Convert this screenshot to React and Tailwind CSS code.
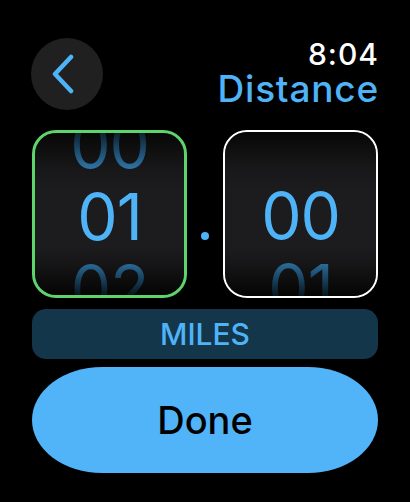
const font = { fontFamily: 'Inter, "Noto Sans", sans-serif' }

function Picker({ values, active }) {
    return (
        <div
            className={`relative h-[168px] w-[155px] overflow-hidden rounded-[24px] bg-[#1c1c1e] ${
                active ? 'border-[3px] border-[#5fd36c]' : 'border-2 border-white'
            }`}
        >
            <div className="absolute inset-x-0 top-[-24px] flex flex-col items-center">
                {values.map((v, i) => (
                    <div
                        key={i}
                        className={`h-[72px] text-[64px] leading-[72px] font-normal tracking-[-1px] ${
                            i === 1 ? 'text-[#4fb3f7]' : 'text-[#3588c2]'
                        }`}
                    >
                        {v}
                    </div>
                ))}
            </div>
            {/* top/bottom fade */}
            <div className="pointer-events-none absolute inset-0 bg-[linear-gradient(to_bottom,rgba(0,0,0,0.75),rgba(0,0,0,0.15)_22%,transparent_35%,transparent_70%,rgba(0,0,0,0.2)_80%,rgba(0,0,0,0.85))]" />
        </div>
    )
}

export default function App() {
    return (
        <div className="flex h-[502px] w-[410px] flex-col bg-black px-[32px]" style={font}>
            {/* Header */}
            <div className="flex items-start justify-between pt-[38px]">
                <button className="flex h-[72px] w-[72px] -ml-px items-center justify-center rounded-full bg-[#202020]">
                    <svg width="26" height="40" viewBox="0 0 26 40" className="-ml-[6px]">
                        <path
                            d="M20 3 L4 20 L20 37"
                            fill="none"
                            stroke="#4fb3f7"
                            strokeWidth="4.5"
                            strokeLinecap="round"
                            strokeLinejoin="round"
                        />
                    </svg>
                </button>
                <div className="-mr-px flex flex-col items-end pt-px">
                    <div className="text-[30px] leading-[30px] font-medium tracking-[1px] text-white">8:04</div>
                    <div className="mt-[2px] text-[37px] leading-[36px] font-medium tracking-[0.8px] text-[#4fb3f7]">
                        Distance
                    </div>
                </div>
            </div>

            {/* Pickers */}
            <div className="mt-[20px] flex items-end justify-between">
                <Picker values={['00', '01', '02']} active />
                <div className="mb-[58px] h-[8px] w-[8px] rounded-full bg-[#4fb3f7]" />
                <Picker values={['', '00', '01']} />
            </div>

            {/* Units */}
            <div className="mt-[11px] flex h-[50px] items-center justify-center rounded-[14px] bg-[#14364b]">
                <span className="text-[30px] font-medium text-[#4fb3f7]">MILES</span>
            </div>

            {/* Done */}
            <button className="mt-[8px] flex h-[106px] items-center justify-center rounded-[70px/53px] bg-[#51b3f8]">
                <span className="text-[38px] font-medium text-black">Done</span>
            </button>
        </div>
    )
}
